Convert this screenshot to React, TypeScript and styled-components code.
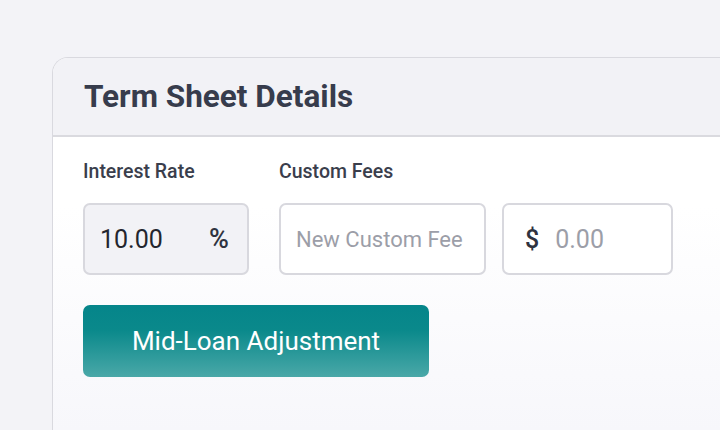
import styled, { createGlobalStyle } from 'styled-components';

const GlobalStyle = createGlobalStyle`
	html, body {
		margin: 0;
		padding: 0;
		background: #f3f3f7;
		font-family: Roboto, 'Liberation Sans', sans-serif;
		overflow: hidden;
	}
`;

const Page = styled.div`
	width: 720px;
	height: 430px;
	padding: 57px 0 0 52px;
	box-sizing: border-box;
	overflow: hidden;
`;

const Card = styled.section`
	width: 668px;
	height: 373px;
	border: 1.5px solid #d9d9df;
	border-right: none;
	border-bottom: none;
	border-top-left-radius: 16px;
	background: linear-gradient(180deg, #ffffff 0%, #ffffff 40%, #f7f7fb 100%);
	overflow: hidden;
	box-sizing: border-box;
`;

const Header = styled.header`
	height: 77px;
	display: flex;
	align-items: center;
	padding-left: 31px;
	background: #f2f2f6;
	border-bottom: 2px solid #dadadf;
`;

const Title = styled.h2`
	margin: 0;
	font-size: 31.5px;
	font-weight: 700;
	color: #373c4c;
`;

const Body = styled.div`
	padding: 23px 30px;
	display: flex;
	flex-direction: column;
	gap: 30px;
`;

const Fields = styled.div`
	display: flex;
	gap: 30px;
`;

const Field = styled.div`
	display: flex;
	flex-direction: column;
	gap: 19px;
`;

const Label = styled.label`
	font-size: 19.5px;
	font-weight: 500;
	color: #3a3e4c;
	line-height: 24px;
`;

const Row = styled.div`
	display: flex;
	gap: 16px;
`;

const InputBox = styled.div<{ $width: number; $filled?: boolean }>`
	width: ${(p) => p.$width}px;
	height: 72px;
	box-sizing: border-box;
	display: flex;
	align-items: center;
	padding: 0 15px;
	border: 2px solid #d8d8de;
	border-radius: 7px;
	background: ${(p) => (p.$filled ? '#f2f2f6' : '#ffffff')};
	font-size: 25px;
`;

const Value = styled.span`
	flex: 1;
	color: #23252e;
`;

const Placeholder = styled.span<{ $size?: number }>`
	color: #9c9ea8;
	font-size: ${(p) => p.$size ?? 22}px;
`;

const Unit = styled.span`
	color: #2f3340;
	font-size: 27px;
	font-weight: 500;
	margin-right: 3px;
`;

const Prefix = styled.span`
	color: #2f3340;
	font-size: 25px;
	font-weight: 500;
	margin: 0 16px 0 6px;
`;

const Button = styled.button`
	width: 346px;
	height: 72px;
	border: none;
	border-radius: 7px;
	background: linear-gradient(180deg, #05858a 0%, #0a898b 35%, #4aa8a8 100%);
	color: #ffffff;
	font-family: Roboto, 'Liberation Sans', sans-serif;
	font-size: 26px;
	font-weight: 400;
	cursor: pointer;
`;

export default function App() {
	return (
		<>
			<GlobalStyle />
			<Page>
				<Card>
					<Header>
						<Title>Term Sheet Details</Title>
					</Header>
					<Body>
						<Fields>
							<Field>
								<Label>Interest Rate</Label>
								<InputBox $width={166} $filled>
									<Value>10.00</Value>
									<Unit>%</Unit>
								</InputBox>
							</Field>
							<Field>
								<Label>Custom Fees</Label>
								<Row>
									<InputBox $width={207}>
										<Placeholder>New Custom Fee</Placeholder>
									</InputBox>
									<InputBox $width={171}>
										<Prefix>$</Prefix>
										<Placeholder $size={25}>0.00</Placeholder>
									</InputBox>
								</Row>
							</Field>
						</Fields>
						<div>
							<Button>Mid-Loan Adjustment</Button>
						</div>
					</Body>
				</Card>
			</Page>
		</>
	);
}
